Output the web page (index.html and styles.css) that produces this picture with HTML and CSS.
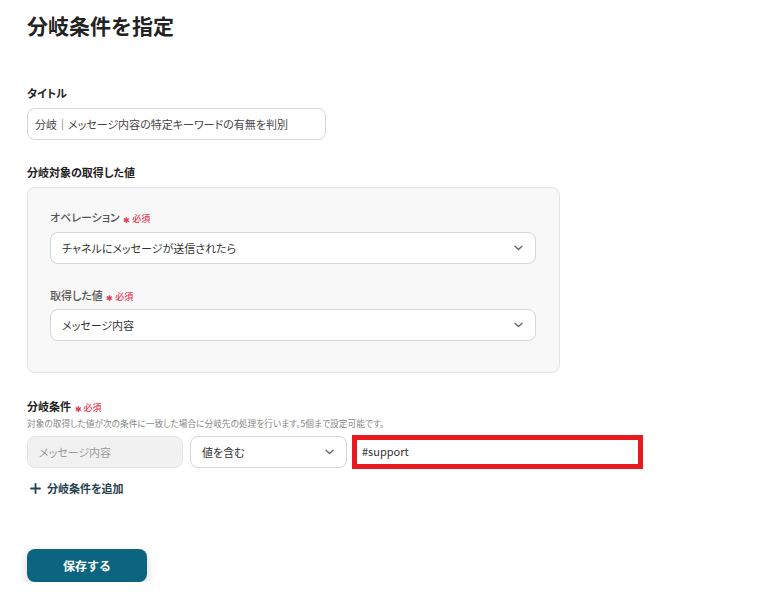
FILE: index.html
```html
<!DOCTYPE html>
<html lang="ja">
<head>
<meta charset="utf-8">
<title>分岐条件を指定</title>
<link rel="stylesheet" href="styles.css">
</head>
<body>
<main class="page">
  <h1 class="page-title">分岐条件を指定</h1>

  <div class="label label-title">タイトル</div>
  <div class="field title-field">分岐｜メッセージ内容の特定キーワードの有無を判別</div>

  <div class="label label-target">分岐対象の取得した値</div>
  <section class="panel">
    <div class="sub-label">オペレーション <span class="req"><span class="ast">✱</span>必須</span></div>
    <div class="field select op-select">
      <span>チャネルにメッセージが送信されたら</span>
      <svg class="chev" width="9" height="6" viewBox="0 0 9 6"><path d="M1 1.2l3.5 3.3 3.5-3.3" fill="none" stroke="#666" stroke-width="1.3" stroke-linecap="round" stroke-linejoin="round"/></svg>
    </div>
    <div class="sub-label second">取得した値 <span class="req"><span class="ast">✱</span>必須</span></div>
    <div class="field select">
      <span>メッセージ内容</span>
      <svg class="chev" width="9" height="6" viewBox="0 0 9 6"><path d="M1 1.2l3.5 3.3 3.5-3.3" fill="none" stroke="#666" stroke-width="1.3" stroke-linecap="round" stroke-linejoin="round"/></svg>
    </div>
  </section>

  <div class="label label-cond">分岐条件 <span class="req"><span class="ast">✱</span>必須</span></div>
  <p class="desc">対象の取得した値が次の条件に一致した場合に分岐先の処理を行います。5個まで設定可能です。</p>
  <div class="cond-row">
    <div class="field disabled">メッセージ内容</div>
    <div class="field select cond-select">
      <span>値を含む</span>
      <svg class="chev" width="9" height="6" viewBox="0 0 9 6"><path d="M1 1.2l3.5 3.3 3.5-3.3" fill="none" stroke="#666" stroke-width="1.3" stroke-linecap="round" stroke-linejoin="round"/></svg>
    </div>
    <div class="field highlight">#support</div>
  </div>

  <div class="add-cond">
    <svg width="11" height="11" viewBox="0 0 11 11"><path d="M5.5 1v9M1 5.5h9" stroke="#1f4455" stroke-width="1.8" stroke-linecap="round"/></svg>
    <span>分岐条件を追加</span>
  </div>

  <button class="save-btn" type="button">保存する</button>
</main>
</body>
</html>
```

FILE: styles.css
```css
* { box-sizing: border-box; }
html, body { margin: 0; padding: 0; background: #fff; }
body {
  font-family: "Noto Sans CJK JP", "Noto Sans", sans-serif;
  color: #222;
  font-feature-settings: "palt";
}
.page { padding: 9px 0 0 27px; }

.page-title {
  margin: 0;
  font-size: 21px;
  line-height: 32px;
  font-weight: 700;
  color: #222;
  font-feature-settings: normal;
}

.label {
  font-size: 11px;
  line-height: 16px;
  height: 16px;
  font-weight: 700;
  color: #222;
}
.label-title { margin-top: 44px; }
.label-target { margin-top: 24px; }
.label-cond { margin-top: 25px; }

.field {
  height: 32px;
  border: 1px solid #d3d6dd;
  border-radius: 8px;
  background: #fff;
  font-size: 11px;
  color: #333;
  display: flex;
  align-items: center;
  padding: 0 11px;
  white-space: nowrap;
}
.title-field { width: 299px; margin-top: 7px; padding-left: 7px; color: #444; }

.panel {
  margin-top: 7px;
  width: 533px;
  background: #f8f8f9;
  border: 1px solid #e3e4e6;
  border-radius: 8px;
  padding: 21px 23px 31px 22px;
}
.sub-label {
  font-size: 11px;
  line-height: 16px;
  height: 16px;
  font-weight: 500;
  color: #555;
  margin-bottom: 7px;
}
.sub-label.second { margin-top: 23px; margin-bottom: 6px; }

.select { justify-content: space-between; padding-right: 12px; }
.chev { flex: none; }

.req {
  color: #e83a52;
  font-size: 9px;
  line-height: 1;
  font-weight: 500;
  margin-left: 1px;
}
.ast { font-size: 8px; margin-right: 2px; position: relative; top: 1px; }

.desc {
  margin: 4px 0 0;
  font-size: 8.7px;
  line-height: 12px;
  height: 12px;
  color: #888;
  white-space: nowrap;
}

.cond-row {
  margin-top: 5px;
  display: flex;
  align-items: center;
}
.disabled {
  width: 156px;
  background: #f1f1f2;
  border-color: #e3e4e6;
  color: #999;
}
.cond-select { width: 157px; margin-left: 7px; }
.highlight {
  width: 291px;
  height: 34px;
  margin-left: 5px;
  border: 5px solid #e8191f;
  border-radius: 0;
  padding-left: 5px;
  color: #333;
  align-items: flex-start;
  padding-top: 3px;
}

.add-cond {
  margin-top: 11px;
  margin-left: 3px;
  display: flex;
  align-items: center;
  gap: 6px;
  font-size: 11px;
  line-height: 16px;
  height: 16px;
  font-weight: 700;
  color: #23404f;
}

.save-btn {
  display: block;
  margin-top: 53px;
  width: 120px;
  height: 33px;
  border: none;
  border-radius: 8px;
  background: #0b6580;
  color: #fff;
  font-family: "Noto Sans CJK JP", sans-serif;
  font-size: 12px;
  font-weight: 700;
  box-shadow: 0 4px 10px rgba(0, 0, 0, 0.18);
}
```
